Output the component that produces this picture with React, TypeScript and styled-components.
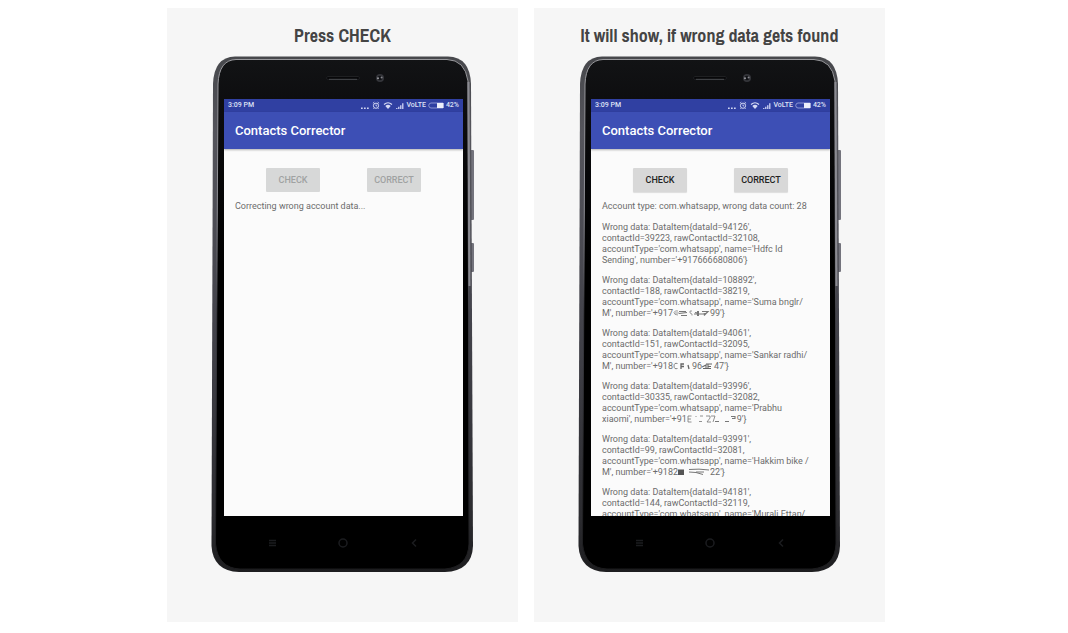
import React from "react";
import styled, { createGlobalStyle } from "styled-components";

const GlobalStyle = createGlobalStyle`
  *, *::before, *::after { box-sizing: border-box; }
  body { margin: 0; background: #fff; font-family: Roboto, "Liberation Sans", sans-serif; }
`;

const Gallery = styled.main`
  display: flex;
  flex-wrap: wrap;
  justify-content: center;
  padding: 8px 0;
`;

const Card = styled.section`
  display: flex;
  flex-direction: column;
  align-items: center;
  flex: 0 1 351px;
  margin-right: 16px;
  padding: 16px 0 50px;
  background: #f6f6f6;
`;

const Caption = styled.h2`
  margin: 0 0 8px;
  font: bold 18px/24px "Archivo Narrow", "Liberation Sans Narrow", "Roboto Condensed", sans-serif;
  color: #444;
  white-space: nowrap;
`;

const Phone = styled.div`
  position: relative;
  width: 263px;
  padding: 43px 11px 56px 13px;
`;

const BodyArt = styled.svg`
  position: absolute;
  inset: 0;
  width: 100%;
  height: 100%;
`;

const Screen = styled.div`
  position: relative;
  display: flex;
  flex-direction: column;
  height: 417px;
  overflow: hidden;
  background: #fbfbfb;
`;

const StatusBar = styled.div`
  display: flex;
  flex: none;
  align-items: center;
  justify-content: space-between;
  height: 13px;
  padding: 0 4px;
  background: #3040a2;
  color: #dfe2f5;
  font-size: 7px;
  font-weight: 500;
  line-height: 13px;
`;

const Indicators = styled.div`
  display: flex;
  align-items: center;
  gap: 2px;
`;

const AppBar = styled.header`
  display: flex;
  flex: none;
  align-items: center;
  height: 37px;
  padding: 0 11px;
  background: #3d4fb5;
  box-shadow: 0 1px 2px rgba(0, 0, 0, 0.3);
`;

const AppTitle = styled.h3`
  margin: 0;
  color: #fff;
  font-size: 13px;
  font-weight: 500;
  line-height: 16px;
`;

const Content = styled.div`
  padding: 19px 11px 0;
`;

const Actions = styled.div`
  display: flex;
  justify-content: center;
  gap: 47px;
  margin-bottom: 9px;
`;

const ActionButton = styled.button`
  width: 54px;
  height: 24px;
  padding: 0;
  border: 0;
  border-radius: 1px;
  background: #d8d8d8;
  box-shadow: 0 1px 1px rgba(0, 0, 0, 0.12);
  color: #222;
  font: 500 9px/12px Roboto, sans-serif;

  &:disabled {
    background: #d7d8d8;
    box-shadow: none;
    color: #a0a2a2;
  }
`;

const Message = styled.p`
  margin: 0 0 10px;
  color: #6c6c6c;
  font-size: 9px;
  line-height: 11px;
  white-space: nowrap;
`;

const Entry = styled(Message)`
  margin-bottom: 9px;
`;

const Smudge = styled.svg`
  display: inline-block;
  height: 8px;
  vertical-align: -1px;
`;

function PhoneBody({ id }: { id: string }) {
  return (
    <BodyArt viewBox="0 0 263 516" aria-hidden="true">
      <defs>
        <linearGradient id={`${id}-edge`} x1="0" y1="0" x2="0" y2="1">
          <stop offset="0" stopColor="#47484c" />
          <stop offset="0.15" stopColor="#55555c" />
          <stop offset="0.5" stopColor="#44444c" />
          <stop offset="0.9" stopColor="#2b2b2f" />
          <stop offset="1" stopColor="#1d1d1f" />
        </linearGradient>
        <linearGradient id={`${id}-shine`} x1="0" y1="0" x2="0" y2="1">
          <stop offset="0" stopColor="#99999d" />
          <stop offset="0.3" stopColor="#8c8c92" />
          <stop offset="0.5" stopColor="#3a3a40" />
          <stop offset="1" stopColor="#1b1b1d" />
        </linearGradient>
        <linearGradient id={`${id}-glass`} x1="0" y1="0" x2="0" y2="1">
          <stop offset="0" stopColor="#121315" />
          <stop offset="0.12" stopColor="#0b0b0d" />
          <stop offset="0.4" stopColor="#000" />
        </linearGradient>
      </defs>
      <path d="M259 94h3q1 0 1 1v68q0 1-1 1h-3z M259 187h3q1 0 1 1v27q0 1-1 1h-3z" fill="#73737c" />
      <path
        d="M24 .5H237Q259 1 260 28L262 490Q261 515 234 516H28Q2 515 .5 490L2 28Q3 1 24 .5z"
        fill={`url(#${id}-edge)`}
      />
      <path
        d="M25 3.500H236Q254 4 257 25L258 488Q257 511 234 513H29Q7 512 4.500 488L7 28Q8 4 25 3.500z"
        fill={`url(#${id}-glass)`}
        stroke={`url(#${id}-shine)`}
      />
      <path d="M257.500 26L258.500 230" stroke="#8b8b92" strokeWidth="2" />
      <path d="M117 20.500h30" stroke="#26272a" />
      <rect x="115.500" y="20.500" width="33" height="3" rx="1.500" fill="#08080a" stroke="#232427" strokeWidth=".7" />
      <path d="M118 23.300h28" stroke="#56575c" strokeWidth=".8" />
      <circle cx="169" cy="22" r="4" fill="#34353a" />
      <circle cx="169" cy="22" r="2.300" fill="#111216" />
      <circle cx="167" cy="22.300" r="1" fill="#9a9ba0" />
      <circle cx="170.600" cy="21.500" r="1" fill="#85868c" />
      <g fill="none" stroke="#1b1c1f" strokeWidth="1.500">
        <path d="M58 484.500h7M58 487h7M58 489.500h7" />
        <circle cx="132" cy="487" r="4" />
        <path d="M205 483.500l-3.500 3.500 3.500 3.500" />
      </g>
    </BodyArt>
  );
}

function StatusIcons() {
  return (
    <svg width="43" height="9" viewBox="0 0 43 9" fill="none" aria-hidden="true">
      <path d="M0 6.500h1.700v1.500H0zM3 6.500h1.700v1.500H3zM6 6.500h1.700v1.500H6z" fill="#cfd4f2" />
      <circle cx="15" cy="4.700" r="2.600" stroke="#d5d9f4" strokeWidth="1" />
      <path d="M15 3.500v1.400h1.200M11.900 2.300l1.400-1.200M18.100 2.300l-1.400-1.200M13 7.200l-.7.800M17 7.200l.7.800" stroke="#d5d9f4" strokeWidth=".9" />
      <path d="M23 3.500q4-3.500 8 0" stroke="#d5d9f4" strokeWidth="1.200" />
      <path d="M24.300 4.900q2.700-2.200 5.400 0L27 8z" fill="#d5d9f4" />
      <path d="M35 7h1.500v1H35zM37 5.700h1.500V8H37zM39 4.200h1.500V8H39zM41 2.200h1.500V8H41z" fill="#b9c0ea" />
    </svg>
  );
}

function Battery() {
  return (
    <svg width="16" height="7" viewBox="0 0 16 7" fill="none" aria-hidden="true">
      <path d="M15 1H3Q1 1 .7 3.500 1 6 3 6h12z" stroke="#a3abdf" strokeWidth=".8" />
      <path d="M9 1h6.500v5H9z" fill="#eceefa" />
    </svg>
  );
}

function Device({ id, busy, children }: { id: string; busy?: boolean; children: React.ReactNode }) {
  return (
    <Phone>
      <PhoneBody id={id} />
      <Screen>
        <StatusBar>
          <span>3:09 PM</span>
          <Indicators>
            <StatusIcons />
            <span>VoLTE</span>
            <Battery />
            <span>42%</span>
          </Indicators>
        </StatusBar>
        <AppBar>
          <AppTitle>Contacts Corrector</AppTitle>
        </AppBar>
        <Content>
          <Actions>
            <ActionButton type="button" disabled={busy}>CHECK</ActionButton>
            <ActionButton type="button" disabled={busy}>CORRECT</ActionButton>
          </Actions>
          {children}
        </Content>
      </Screen>
    </Phone>
  );
}

interface Item {
  dataId: number;
  contactId: number;
  rawContactId: number;
  name: [string, string?];
  number?: React.ReactNode;
}

const items: Item[] = [
  { dataId: 94126, contactId: 39223, rawContactId: 32108, name: ["Hdfc Id", "Sending"], number: "+917666680806" },
  {
    dataId: 108892,
    contactId: 188,
    rawContactId: 38219,
    name: ["Suma bnglr/", "M"],
    number: (
      <>
        +917
        <Smudge width="37" viewBox="0 0 37 8" fill="none" stroke="#777" aria-hidden="true">
          <path d="M5 2Q2 1 1 3.500 1 6 5 6M2 4h4M19 2h-2v2l2 1v1.500" strokeWidth=".7" />
          <path d="M6 2.500h7M6 4.500l8-1M8 6.500h6M21 5h9l4-1M22 3.500l3 .5M29 2.500h6l-4 4" strokeWidth="1.200" />
          <path d="M25 2v5" strokeWidth="2" />
        </Smudge>
        99
      </>
    ),
  },
  {
    dataId: 94061,
    contactId: 151,
    rawContactId: 32095,
    name: ["Sankar radhi/", "M"],
    number: (
      <>
        +918
        <Smudge width="19" viewBox="0 0 19 8" fill="none" stroke="#666" aria-hidden="true">
          <path d="M4.500 1.500Q1 .5 1 4 1 7.500 4.500 6.500" strokeWidth=".8" />
          <path d="M8 7V2h3M8 4.500h3M15 3l1 4" strokeWidth="1.300" />
        </Smudge>
        96
        <Smudge width="12" viewBox="0 0 12 8" fill="none" stroke="#666" aria-hidden="true">
          <path d="M0 5l4-2v4M1 6.500h8M4 2h6M6 4.500h3M6 1.500v5" strokeWidth="1.100" />
        </Smudge>
        47
      </>
    ),
  },
  {
    dataId: 93996,
    contactId: 30335,
    rawContactId: 32082,
    name: ["Prabhu", "xiaomi"],
    number: (
      <>
        +91
        <Smudge width="50" viewBox="0 0 50 8" fill="none" stroke="#777" aria-hidden="true">
          <path d="M4.500 1H1v6h3.500M1 4h3M9 1v1M13 1h3M12 6.500h3M19 1h4v2l-3 4h4M24 1h4l-2 6" strokeWidth=".8" />
          <path d="M28 6.500h4M38 6.500h4M44 1.500h4v2h-3" strokeWidth="1.100" />
        </Smudge>
        9
      </>
    ),
  },
  {
    dataId: 93991,
    contactId: 99,
    rawContactId: 32081,
    name: ["Hakkim bike /", "M"],
    number: (
      <>
        +9182
        <Smudge width="32" viewBox="0 0 32 8" fill="none" stroke="#777" aria-hidden="true">
          <path d="M0 1.500h6v5.500H0z" fill="#555" stroke="none" />
          <path d="M11 1.500q10-1 20 .5M11 4l7 .5 7 2M18 4h8" strokeWidth="1" />
        </Smudge>
        22
      </>
    ),
  },
  { dataId: 94181, contactId: 144, rawContactId: 32119, name: ["Murali Ettan/"] },
];

export default function App() {
  return (
    <>
      <GlobalStyle />
      <Gallery>
        <Card>
          <Caption>Press CHECK</Caption>
          <Device id="check" busy>
            <Message>Correcting wrong account data...</Message>
          </Device>
        </Card>
        <Card>
          <Caption>It will show, if wrong data gets found</Caption>
          <Device id="result">
            <Message>Account type: com.whatsapp, wrong data count: 28</Message>
            {items.map((item) => (
              <Entry key={item.dataId}>
                Wrong data: DataItem{"{"}dataId={item.dataId}',<br />
                contactId={item.contactId}, rawContactId={item.rawContactId},<br />
                accountType='com.whatsapp', name='{item.name[0]}
                {item.number && (
                  <>
                    <br />
                    {item.name[1]}', number='{item.number}'{"}"}
                  </>
                )}
              </Entry>
            ))}
          </Device>
        </Card>
      </Gallery>
    </>
  );
}
